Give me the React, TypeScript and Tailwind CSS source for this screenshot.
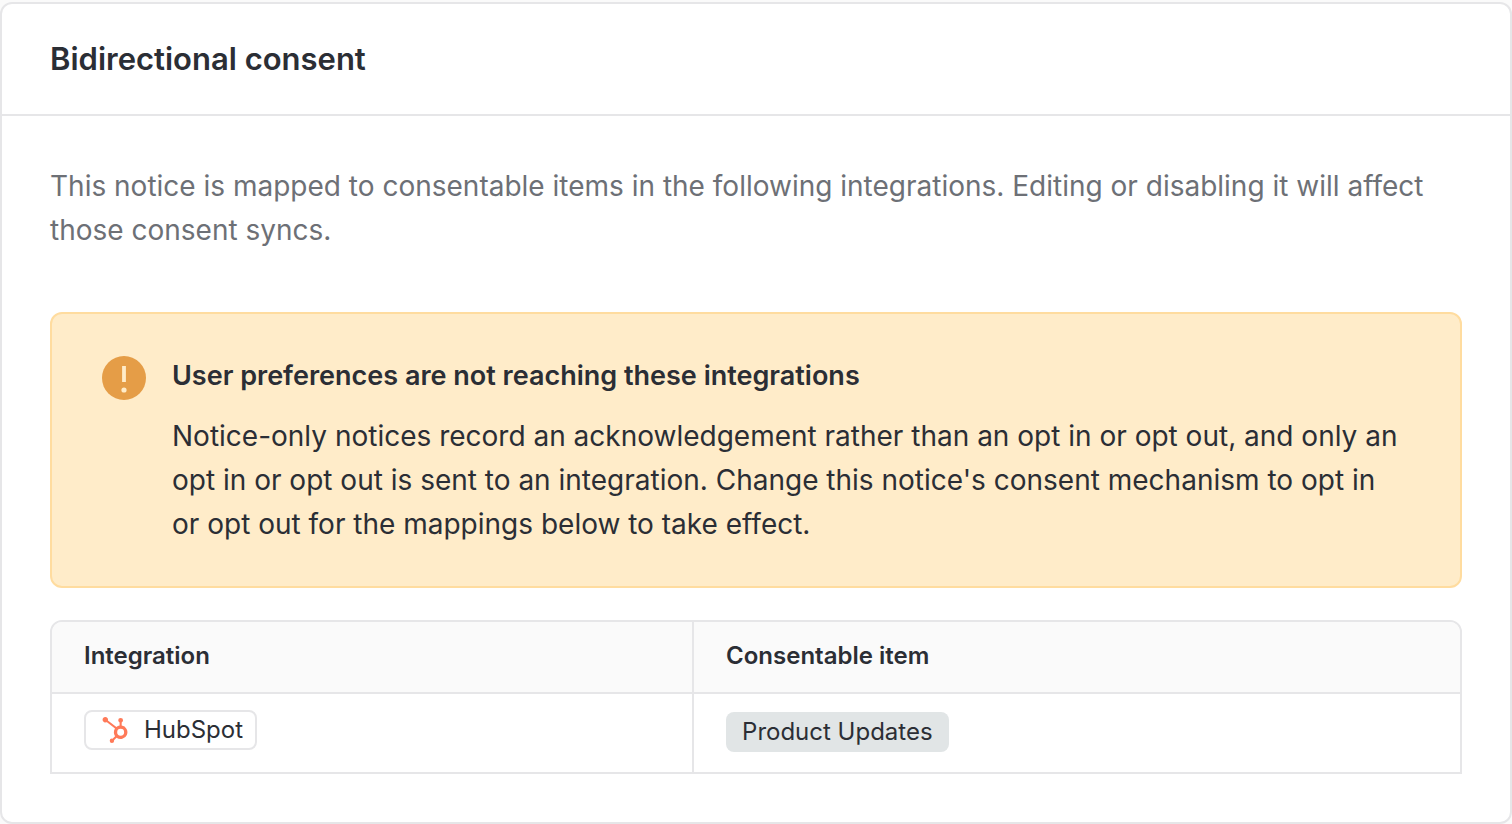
import { SiHubspot } from "react-icons/si";

interface Mapping {
    integration: string;
    item: string;
}

const mappings: Mapping[] = [
    { integration: "HubSpot", item: "Product Updates" },
];

function WarningIcon() {
    return (
        <svg viewBox="0 0 44 44" className="mt-0.5 size-11 shrink-0" aria-hidden="true">
            <circle cx="22" cy="22" r="22" fill="#e59d47" />
            <path d="M20.1 10h3.8v16h-3.8z" fill="#ffecc9" />
            <circle cx="22" cy="34" r="2.6" fill="#ffecc9" />
        </svg>
    );
}

function MappingTable({ rows }: { rows: Mapping[] }) {
    return (
        <table className="w-full table-fixed border-separate border-spacing-0 rounded-t-xl border-2 border-[#e6e6e8] text-left text-2xl">
            <thead>
                <tr>
                    <th scope="col" className="w-[45.6%] rounded-tl-[10px] border-r-2 border-b-2 border-[#e6e6e8] bg-[#fafafa] px-8 pt-4 pb-[18px] leading-9 font-semibold">
                        Integration
                    </th>
                    <th scope="col" className="rounded-tr-[10px] border-b-2 border-[#e6e6e8] bg-[#fafafa] px-8 pt-4 pb-[18px] leading-9 font-semibold">
                        Consentable item
                    </th>
                </tr>
            </thead>
            <tbody>
                {rows.map((row) => (
                    <tr key={row.integration}>
                        <td className="border-r-2 border-[#e6e6e8] px-8 pt-4 pb-5 align-top">
                            <span className="flex h-10 w-fit items-center gap-4 rounded-lg border-2 border-[#e6e6e8] pr-3 pl-4">
                                <SiHubspot className="size-[26px] text-[#ff7a59]" aria-hidden="true" />
                                {row.integration}
                            </span>
                        </td>
                        <td className="px-8 pt-[18px] pb-5 align-top">
                            <span className="flex h-10 w-fit items-center rounded-lg bg-[#e1e5e6] px-4">
                                {row.item}
                            </span>
                        </td>
                    </tr>
                ))}
            </tbody>
        </table>
    );
}

export default function App() {
    return (
        <main className="min-h-screen bg-[#fafafa] pt-0.5 font-['Inter',sans-serif] text-[#2b2e35]">
            <section className="rounded-xl border-2 border-[#e6e6e8] bg-white">
                <header className="border-b-2 border-[#e6e6e8] px-12 py-8">
                    <h1 className="text-[31px] leading-[46px] font-semibold">Bidirectional consent</h1>
                </header>

                <div className="px-12 py-12">
                    <p className="text-[28px] leading-11 text-[#6d7076]">
                        This notice is mapped to consentable items in the following integrations. Editing or disabling it will affect those consent syncs.
                    </p>

                    <div role="alert" className="mt-15 mb-8 flex gap-[26px] rounded-xl border-2 border-[#ffdc9f] bg-[#ffecc9] py-10 pr-14 pl-[50px]">
                        <WarningIcon />
                        <div className="text-[28px] leading-11">
                            <h2 className="mb-4 text-[27px] font-semibold">User preferences are not reaching these integrations</h2>
                            <p>
                                Notice-only notices record an acknowledgement rather than an opt in or opt out, and only an opt in or opt out is sent to an integration. Change this notice's consent mechanism to opt in or opt out for the mappings below to take effect.
                            </p>
                        </div>
                    </div>

                    <MappingTable rows={mappings} />
                </div>
            </section>
        </main>
    );
}
